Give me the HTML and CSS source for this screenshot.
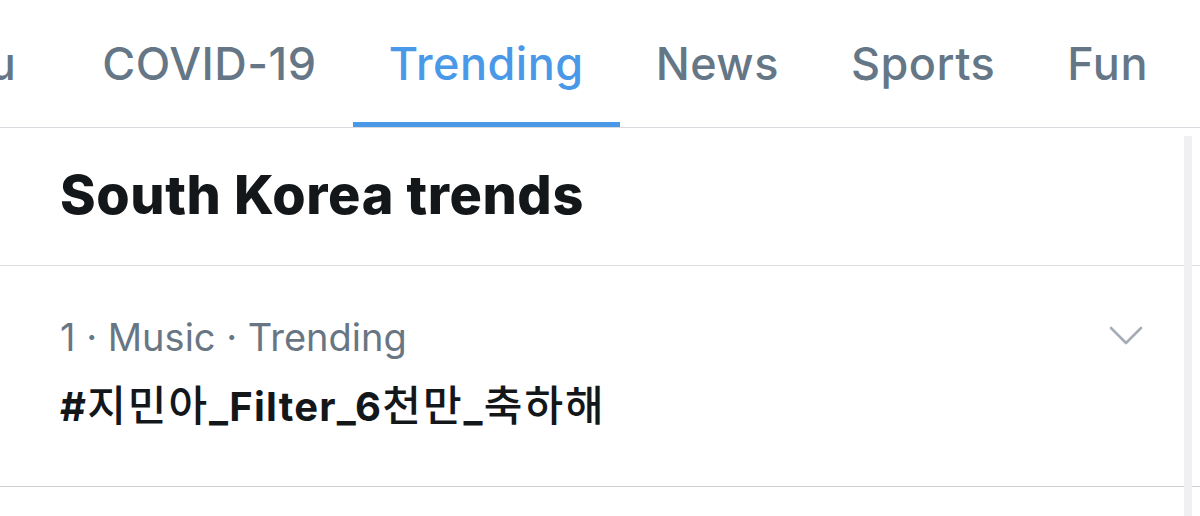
FILE: index.html
```html
<!DOCTYPE html>
<html lang="en">
<head>
<meta charset="utf-8">
<title>Explore</title>
<link rel="stylesheet" href="styles.css">
</head>
<body>
<div class="page">
  <nav class="tabs">
    <div class="track">
      <a class="tab first">For you</a>
      <a class="tab">COVID-19</a>
      <a class="tab active">Trending</a>
      <a class="tab">News</a>
      <a class="tab">Sports</a>
      <a class="tab">Fun</a>
    </div>
  </nav>
  <header class="section-head">
    <h2>South Korea trends</h2>
  </header>
  <article class="trend">
    <div class="trend-text">
      <div class="meta">1 · Music · Trending</div>
      <div class="tag" lang="ko">#<span class="ko">지민아</span>_Filter_6<span class="ko">천만</span>_<span class="ko">축하해</span></div>
    </div>
    <svg class="chev" width="34" height="20" viewBox="0 0 34 20"><path d="M2 2 L17 17 L32 2" fill="none" stroke="#a4adb6" stroke-width="2.6" stroke-linecap="round" stroke-linejoin="round"/></svg>
  </article>
  <div class="scroll-ind"></div>
</div>
</body>
</html>
```

FILE: styles.css
```css
* { box-sizing: border-box; }
html, body { margin: 0; padding: 0; background: #ffffff; }
body {
  width: 1200px;
  height: 516px;
  overflow: hidden;
  font-family: Inter, "Noto Sans CJK KR", sans-serif;
}
.page { position: relative; width: 1200px; height: 516px; }

.tabs {
  height: 128px;
  border-bottom: 1px solid #d9dbe0;
  overflow: hidden;
}
.track {
  display: flex;
  height: 127px;
  margin-left: -184px;
  white-space: nowrap;
}
.tab {
  display: flex;
  align-items: flex-start;
  padding: 36px 36px 0;
  font-size: 45px;
  font-weight: 500;
  letter-spacing: 0.5px;
  color: #657786;
  border-bottom: 5px solid transparent;
  flex: none;
  line-height: 56px;
}
.tab.first { padding-right: 50px; }
.tab.active {
  color: #4a99e9;
  border-bottom-color: #4a99e9;
}

.section-head {
  height: 138px;
  border-bottom: 1px solid #dcdde1;
  display: flex;
  align-items: center;
  padding: 0 60px 4px;
}
.section-head h2 {
  margin: 0;
  font-size: 54px;
  font-weight: 800;
  letter-spacing: 0.6px;
  color: #14171a;
}

.trend {
  height: 221px;
  border-bottom: 1px solid #cfd0d3;
  display: flex;
  align-items: flex-start;
  justify-content: space-between;
  padding: 47px 57px 0 60px;
}
.meta {
  font-size: 38px;
  color: #687684;
  line-height: 48px;
}
.tag {
  margin-top: 19px;
  font-size: 40px;
  font-weight: 700;
  letter-spacing: 1.2px;
  color: #14171a;
  line-height: 52px;
}
.tag .ko { font-size: 42px; font-weight: 500; letter-spacing: 2px; }
.chev { margin-top: 13px; }

.scroll-ind {
  position: absolute;
  left: 1184px;
  top: 136px;
  width: 8px;
  height: 380px;
  background: #f0f0f2;
}
```
